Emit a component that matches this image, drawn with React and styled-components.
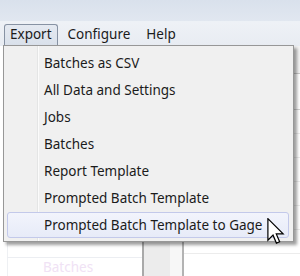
import React from 'react'
import styled, { createGlobalStyle } from 'styled-components'

const GlobalStyle = createGlobalStyle`
  html, body {
    margin: 0;
    padding: 0;
    background: #ffffff;
  }
  body {
    font-family: 'Noto Sans', 'Open Sans', sans-serif;
    font-size: 13.5px;
    color: #1b1b1b;
  }
`

const Window = styled.div`
  position: relative;
  width: 300px;
  height: 276px;
  overflow: hidden;
  display: flex;
  flex-direction: column;
  background: #ffffff;
`

const TitleStrip = styled.div`
  height: 21px;
  flex: 0 0 auto;
  background: linear-gradient(to bottom, #d9e1ec, #e1e7f0);
  border-bottom: 1px solid #edf1f6;
`

const MenuBar = styled.div`
  height: 22px;
  flex: 0 0 auto;
  display: flex;
  align-items: stretch;
  gap: 4px;
  padding: 2px 0 0 4px;
  background: linear-gradient(to bottom, #eef1f6, #e8ecf2);
`

const MenuTitle = styled.div`
  display: flex;
  align-items: center;
  padding: 0 5px 1px;
  font-size: 13.5px;
  line-height: 1;
  border: 1px solid ${(p) => (p.open ? '#8792a3' : 'transparent')};
  border-bottom: none;
  border-radius: 3px 3px 0 0;
  background: ${(p) => (p.open ? 'linear-gradient(to bottom, #e4e9f1, #d9e0ea)' : 'transparent')};
`

const Content = styled.div`
  flex: 1 1 auto;
  display: flex;
  min-height: 0;
`

const LeftPanel = styled.div`
  width: 135px;
  flex: 0 0 auto;
  display: flex;
  flex-direction: column;
  justify-content: flex-end;
  background: #ffffff;
  border-left: 7px solid #ffffff;
  box-shadow: inset 1px 0 0 #eef0f3;
`

const TabRow = styled.div`
  height: 18px;
  border-top: 1px solid #eceef2;
  display: flex;
  align-items: center;
  padding-left: 36px;
  color: #f0e2f5;
`

const Splitter = styled.div`
  width: 38px;
  flex: 0 0 auto;
  border-left: 2px solid #a9a9a9;
  border-right: 2px solid #b3b3b3;
  background: linear-gradient(to right, #ececec 0, #ececec 26px, #f7f7f7 26px);
`

const RightPanel = styled.div`
  flex: 1 1 auto;
  display: flex;
  flex-direction: column;
  background: #ffffff;
`

const Block = styled.div`
  height: ${(p) => p.h}px;
  flex: 0 0 auto;
  background: ${(p) => p.bg || '#ffffff'};
  border-bottom: 1px solid ${(p) => p.line || '#e6e6e6'};
`

const Dropdown = styled.div`
  position: absolute;
  left: 3px;
  top: 45px;
  width: 289px;
  padding: 3px 0 2px;
  background: linear-gradient(to right, #f0f0f0 0, #f0f0f0 33px, #e4e5e5 33px, #e4e5e5 34px, #fbfbfb 34px, #fbfbfb 35px, #f0f0f0 35px);
  border: 1px solid #979797;
  box-shadow: 3px 3px 3px rgba(0, 0, 0, 0.38);
`

const Item = styled.div`
  height: 24px;
  margin: 1px 4px 1px 3px;
  padding-left: 36px;
  display: flex;
  align-items: center;
  white-space: nowrap;
  border: 1px solid ${(p) => (p.active ? '#c3c9ea' : 'transparent')};
  border-radius: 3px;
  background: ${(p) => (p.active ? 'linear-gradient(to bottom, #f2f4fc, #e7ebf8)' : 'transparent')};
`

const Cursor = styled.svg`
  position: absolute;
  left: 266px;
  top: 218px;
`

const exportItems = [
  'Batches as CSV',
  'All Data and Settings',
  'Jobs',
  'Batches',
  'Report Template',
  'Prompted Batch Template',
  'Prompted Batch Template to Gage',
]

const App = () => {
  return (
    <Window>
      <GlobalStyle />
      <TitleStrip />
      <MenuBar>
        <MenuTitle open>Export</MenuTitle>
        <MenuTitle>Configure</MenuTitle>
        <MenuTitle>Help</MenuTitle>
      </MenuBar>
      <Content>
        <LeftPanel>
          <TabRow>Batches</TabRow>
        </LeftPanel>
        <Splitter />
        <RightPanel>
          <Block h={27} bg="#f3f3f3" line="#c9c9c9" />
          <Block h={35} line="#d4d4d4" />
          {[0, 1, 2, 3, 4, 5, 6].map((i) => (
            <Block key={i} h={23} line="#ececec" />
          ))}
        </RightPanel>
      </Content>

      <Dropdown>
        {exportItems.map((label, i) => (
          <Item key={label} active={i === exportItems.length - 1}>
            {label}
          </Item>
        ))}
      </Dropdown>

      <Cursor width="20" height="27" viewBox="0 0 13 20">
        <path
          d="M0.5 0.5 L0.5 16.5 L4.3 12.7 L6.8 18.6 L9.2 17.6 L6.7 11.8 L11.8 11.8 Z"
          fill="#ffffff"
          stroke="#000000"
          strokeWidth="0.9"
          strokeLinejoin="miter"
        />
      </Cursor>
    </Window>
  )
}

export default App
